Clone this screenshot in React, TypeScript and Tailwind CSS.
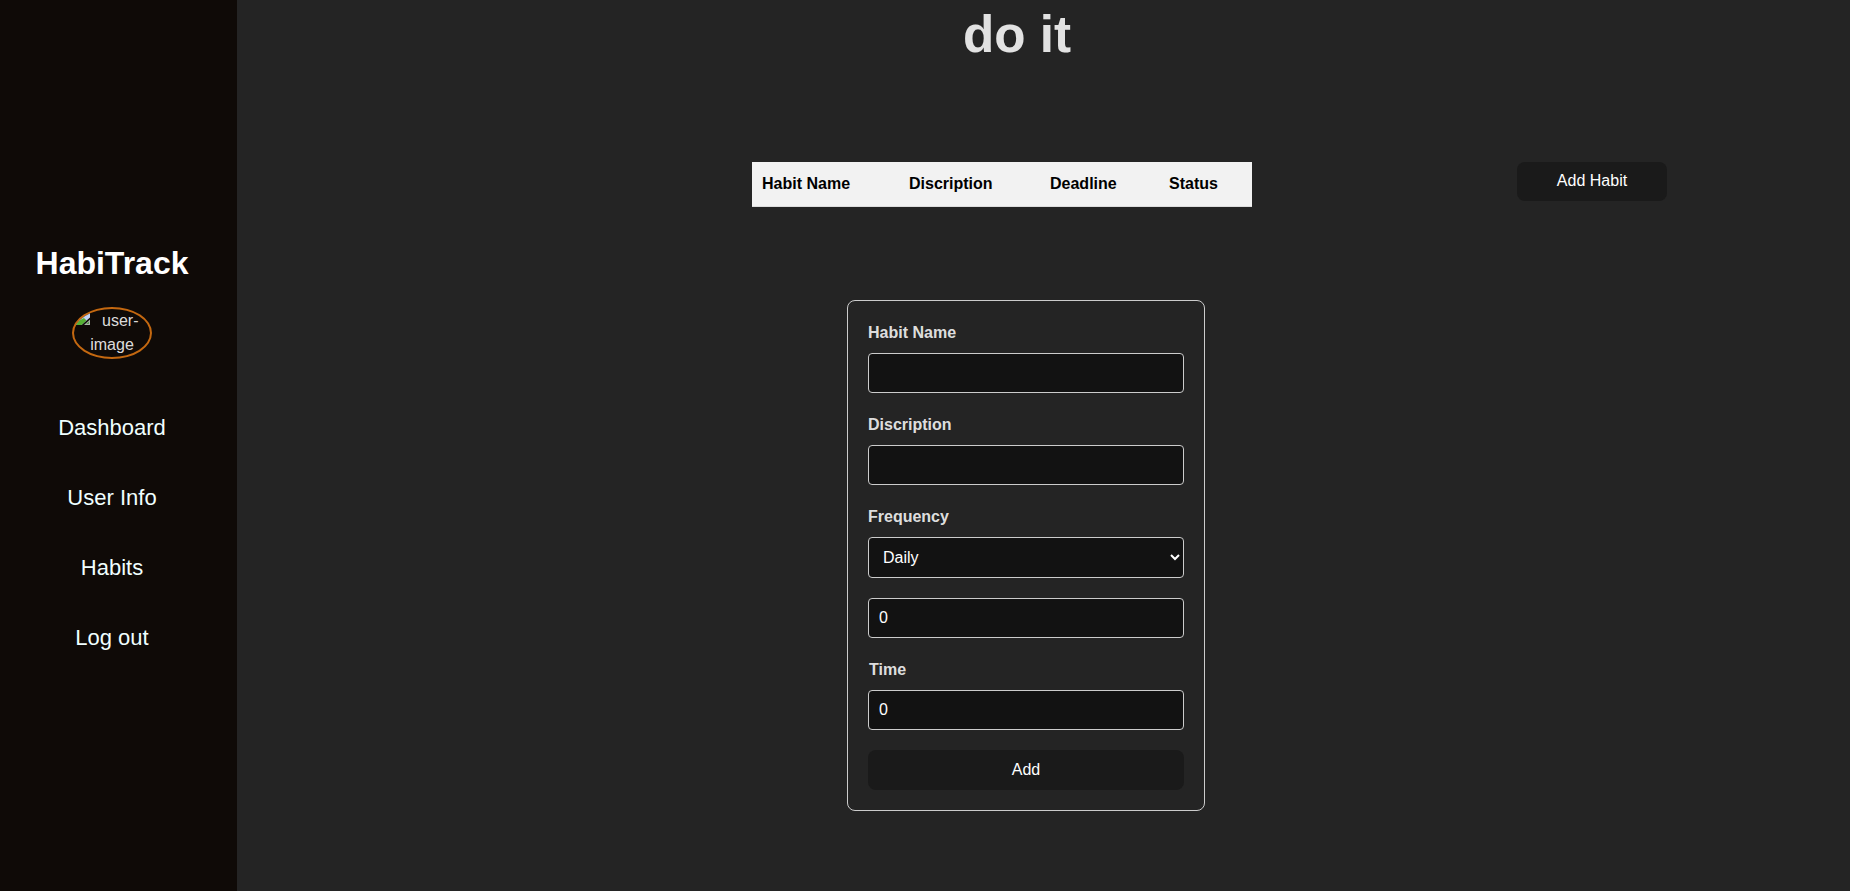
import React from 'react';

const navItems = ['Dashboard', 'User Info', 'Habits', 'Log out'];

const field =
  'block w-full rounded border border-[#ccc] bg-[#121212] text-base text-white outline-none';

function BrokenImage() {
  return (
    <svg width="16" height="16" viewBox="0 0 16 16" className="block">
      <path d="M1 0h14v6.500L6.500 14H1z" fill="#c3d3f5" />
      <path d="M1 14v-2l5-3.500 3-1.500 2.500 2.500L6.500 14z" fill="#55b033" />
      <path d="M9 14l6-5.500v5.500z" fill="#a9b3a9" />
      <path d="M11 13l3-2.500v2.500z" fill="#5f9a55" />
    </svg>
  );
}

function Sidebar() {
  return (
    <aside className="flex w-[237px] shrink-0 flex-col items-center bg-[#0f0a07] pr-[13px] pt-[239px]">
      <h1 className="text-[32px] font-bold leading-[48px] text-white">HabiTrack</h1>
      <div className="mt-5 h-[52px] w-20 overflow-hidden rounded-[50%] border-2 border-[#c46810] text-center text-base leading-6 text-white/87">
        <div className="flex h-6 pl-px">
          <span className="w-[27px] pt-0.5">
            <BrokenImage />
          </span>
          <span>user-</span>
        </div>
        <div>image</div>
      </div>
      <nav className="mt-[52px] flex flex-col items-center gap-9">
        {navItems.map((item) => (
          <a key={item} href="#" className="text-[22px] leading-[34px] text-[#f0ffff]">
            {item}
          </a>
        ))}
      </nav>
    </aside>
  );
}

function HabitForm() {
  return (
    <form className="ml-[610px] mt-[93px] flex w-[358px] flex-col gap-5 rounded-lg border border-[#ccc] p-5">
      <div>
        <label className="mb-2 block font-bold leading-6">Habit Name</label>
        <input className={field + ' h-10 px-2.5'} />
      </div>
      <div>
        <label className="mb-2 block font-bold leading-6">Discription</label>
        <input className={field + ' h-10 px-2.5'} />
      </div>
      <div>
        <label className="mb-2 block font-bold leading-6">Frequency</label>
        <select className={field + ' h-[41px] px-2.5'} defaultValue="Daily">
          <option>Daily</option>
          <option>Weekly</option>
        </select>
      </div>
      <input className={field + ' h-10 px-2.5'} defaultValue="0" />
      <div>
        <label className="mb-2 block pl-px font-bold leading-6">Time</label>
        <input className={field + ' h-10 px-2.5'} defaultValue="0" />
      </div>
      <button type="button" className="h-10 w-full rounded-lg bg-[#1a1a1a] text-base text-white">
        Add
      </button>
    </form>
  );
}

export default function App() {
  return (
    <div className="flex h-[891px] w-full overflow-hidden bg-[#242424] font-['Liberation_Sans',Arial,sans-serif] text-base text-white/87">
      <Sidebar />
      <main className="flex min-w-0 flex-1 flex-col">
        <h1 className="pl-[726px] pt-[7px] text-[51.2px] font-bold leading-[56px]">do it</h1>
        <div className="mt-[99px] flex items-start pl-[515px]">
          <table className="h-[45px] w-[500px] table-fixed border-collapse bg-[#f2f2f2] text-left text-black">
            <thead>
              <tr className="border-b border-[#ddd]">
                <th className="w-[147px] px-2.5">Habit Name</th>
                <th className="w-[141px] px-2.5">Discription</th>
                <th className="w-[119px] px-2.5">Deadline</th>
                <th className="px-2.5">Status</th>
              </tr>
            </thead>
          </table>
          <button type="button" className="ml-[265px] h-[39px] w-[150px] rounded-lg bg-[#1a1a1a] pb-0.5 text-base text-white">
            Add Habit
          </button>
        </div>
        <HabitForm />
      </main>
    </div>
  );
}
